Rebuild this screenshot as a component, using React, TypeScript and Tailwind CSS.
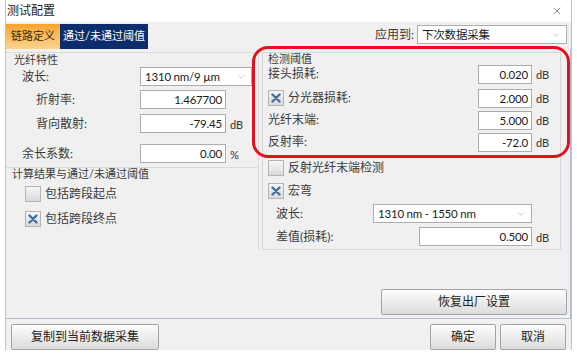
import React from 'react';
import { ChevronDown, X } from 'lucide-react';

const num = "font-['Lato','Noto_Sans_CJK_SC',sans-serif] text-[11.5px] tracking-[-0.2px]";

const Check = ({ checked }: { checked?: boolean }) => (
  <div className="w-[16px] h-[16px] shrink-0 border border-[#b4b4b4] bg-linear-to-b from-[#f6f6f6] to-[#dadada] flex items-center justify-center">
    {checked && (
      <svg width="10" height="10" viewBox="0 0 10 10">
        <path d="M1.5 1.5 L8.5 8.5 M8.5 1.5 L1.5 8.5" stroke="#3f6f9f" strokeWidth="2.4" strokeLinecap="round" />
      </svg>
    )}
  </div>
);

const Field = ({ value, className }: { value: string; className: string }) => (
  <div className={`h-[19px] shrink-0 border border-[#acacac] bg-white text-right pr-[3px] leading-[17px] text-[#1a1a1a] ${num} ${className}`}>
    {value}
  </div>
);

const Select = ({ value, className }: { value: string; className: string }) => (
  <div className={`h-[19px] shrink-0 border border-[#acacac] bg-white flex items-center pl-[4px] pr-[5px] text-[#1a1a1a] ${num} ${className}`}>
    <span className="flex-1 whitespace-nowrap">{value}</span>
    <ChevronDown size={10} strokeWidth={1.2} className="text-[#9a9a9a]" />
  </div>
);

const Unit = ({ children, className }: { children?: React.ReactNode; className: string }) => (
  <span className={`text-[11px] text-[#333] pt-[3px] pl-[4px] font-['Lato',sans-serif] ${className}`}>{children}</span>
);

const Btn = ({ children, className }: { children: React.ReactNode; className: string }) => (
  <div className={`h-[26px] border border-[#a3a3a3] rounded-[2px] bg-linear-to-b from-[#fdfdfd] to-[#dcdcdc] flex items-center justify-center text-[12px] text-[#222] ${className}`}>
    {children}
  </div>
);

export default function App() {
  return (
    <div className="w-[577px] h-[361px] bg-white relative overflow-hidden text-[12px] text-[#3a3a3a] font-['Lato','Noto_Sans_CJK_SC',sans-serif]">
      <div className="ml-[5px] w-[567px] h-[350px] border-x border-[#a9c6e6] flex flex-col">
        {/* title */}
        <div className="h-[25px] flex items-center pl-[1px] pr-[8px] bg-white text-[12px] text-[#222]">
          <span className="flex-1">测试配置</span>
          <X size={12} strokeWidth={1.3} className="text-[#555]" />
        </div>

        <div className="bg-[#f0f0f0] flex-1 flex flex-col">
          {/* tabs */}
          <div className="h-[27px] flex items-start">
            <div className="mt-[2px] h-[25px] w-[54px] bg-linear-to-b from-[#f6a328] to-[#fcd58c] flex items-center justify-center text-[11px] text-[#3b2a05] whitespace-nowrap">
              链路定义
            </div>
            <div className="mt-[2px] h-[25px] w-[88px] bg-[#0c2d6b] flex items-center justify-center text-[11px] text-white whitespace-nowrap">
              通过/未通过阈值
            </div>
            <div className="ml-auto mt-[3px] mr-[4px] flex items-center">
              <span className="mr-[3px] text-[12px]">应用到:</span>
              <Select value="下次数据采集" className="w-[150px] h-[17px]" />
            </div>
          </div>

          {/* panel */}
          <div className="h-[270px] border-r border-b border-[#b3bfcd] flex flex-col">
            <div className="flex">
              {/* left column */}
              <div className="mt-[3px] w-[253px] h-[198px] flex flex-col">
                <div className="border-t border-r border-[#dadada] pb-[4px]">
                  <div className="h-[12px] mt-[1px] pl-[8px] flex items-center text-[11px]">光纤特性</div>
                  <div className="h-[19px] mt-[1px] flex items-center">
                    <span className="w-[134px] pl-[16px]">波长:</span>
                    <Select value="1310 nm/9 µm" className="w-[112px]" />
                  </div>
                  <div className="h-[19px] mt-[4px] flex items-center">
                    <span className="w-[134px] pl-[30px]">折射率:</span>
                    <Field value="1.467700" className="w-[86px]" />
                  </div>
                  <div className="h-[19px] mt-[5px] flex items-center">
                    <span className="w-[134px] pl-[30px]">背向散射:</span>
                    <Field value="-79.45" className="w-[86px]" />
                    <Unit className="">dB</Unit>
                  </div>
                  <div className="h-[19px] mt-[11px] flex items-center">
                    <span className="w-[134px] pl-[16px]">余长系数:</span>
                    <Field value="0.00" className="w-[86px]" />
                    <Unit className="">%</Unit>
                  </div>
                </div>
                <div className="flex-1 border-t border-r border-[#dadada]">
                  <div className="h-[12px] pl-[6px] flex items-center text-[11px]">计算结果与通过/未通过阈值</div>
                  <div className="h-[16px] mt-[6px] pl-[19px] flex items-center">
                    <Check />
                    <span className="ml-[4px]">包括跨段起点</span>
                  </div>
                  <div className="h-[16px] mt-[9px] pl-[19px] flex items-center">
                    <Check checked />
                    <span className="ml-[4px]">包括跨段终点</span>
                  </div>
                </div>
              </div>

              {/* right column */}
              <div className="ml-[3px] mt-[3px] w-[299px] h-[198px] border border-[#d6d6d6] flex flex-col">
                <div className="h-[12px] pl-[5px] flex items-center text-[11px]">检测阈值</div>
                <div className="h-[18px] flex items-center pl-[5px]">
                  <span className="flex-1">接头损耗:</span>
                  <Field value="0.020" className="w-[54px] h-[18px]" />
                  <Unit className="w-[28px]">dB</Unit>
                </div>
                <div className="h-[18px] mt-[6px] flex items-center pl-[5px]">
                  <Check checked />
                  <span className="flex-1 ml-[4px]">分光器损耗:</span>
                  <Field value="2.000" className="w-[54px] h-[18px]" />
                  <Unit className="w-[28px]">dB</Unit>
                </div>
                <div className="h-[18px] mt-[4px] flex items-center pl-[5px]">
                  <span className="flex-1">光纤末端:</span>
                  <Field value="5.000" className="w-[54px] h-[18px]" />
                  <Unit className="w-[28px]">dB</Unit>
                </div>
                <div className="h-[18px] mt-[4px] flex items-center pl-[5px]">
                  <span className="flex-1">反射率:</span>
                  <Field value="-72.0" className="w-[54px] h-[18px]" />
                  <Unit className="w-[28px]">dB</Unit>
                </div>
                <div className="h-[16px] mt-[9px] flex items-center pl-[5px]">
                  <Check />
                  <span className="ml-[4px]">反射光纤末端检测</span>
                </div>
                <div className="h-[16px] mt-[7px] flex items-center pl-[5px]">
                  <Check checked />
                  <span className="ml-[4px]">宏弯</span>
                </div>
                <div className="h-[19px] mt-[5px] flex items-center pl-[13px]">
                  <span className="flex-1">波长:</span>
                  <Select value="1310 nm - 1550 nm" className="w-[159px]" />
                  <span className="w-[28px]" />
                </div>
                <div className="h-[19px] mt-[4px] flex items-center pl-[13px]">
                  <span className="flex-1">差值(损耗):</span>
                  <Field value="0.500" className="w-[113px]" />
                  <Unit className="w-[28px]">dB</Unit>
                </div>
              </div>
            </div>

            <div className="mt-auto mb-[3px] flex justify-end pr-[3px]">
              <Btn className="w-[186px]">恢复出厂设置</Btn>
            </div>
          </div>

          {/* bottom buttons */}
          <div className="mt-[5px] flex items-center px-[5px]">
            <Btn className="w-[148px]">复制到当前数据采集</Btn>
            <Btn className="w-[66px] ml-auto">确定</Btn>
            <Btn className="w-[66px] ml-[4px]">取消</Btn>
          </div>
        </div>
      </div>

      {/* annotation */}
      <div className="absolute left-[252px] top-[46px] w-[318px] h-[112px] border-[3px] border-[#e3111d] rounded-[16px] pointer-events-none" />
    </div>
  );
}
